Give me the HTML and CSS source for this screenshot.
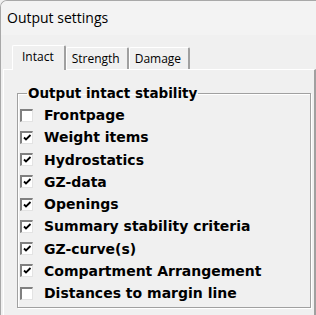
FILE: index.html
```html
<!DOCTYPE html>
<html lang="en">
<head>
    <meta charset="UTF-8">
    <title>Output settings</title>
    <link rel="stylesheet" href="styles.css">
</head>
<body>
    <div class="window">
        <div class="titlebar">Output settings</div>
        <div class="content">
            <div class="tabs">
                <div class="tab active">Intact</div>
                <div class="tab">Strength</div>
                <div class="tab">Damage</div>
            </div>
            <div class="panel">
                <fieldset class="group">
                    <legend>Output intact stability</legend>
                    <ul class="options">
                        <li><span class="check"></span>Frontpage</li>
                        <li><span class="check"><svg viewBox="0 0 9 9"><path d="M1 3.5 L3 5.5 L7.5 1"/></svg></span>Weight items</li>
                        <li><span class="check"><svg viewBox="0 0 9 9"><path d="M1 3.5 L3 5.5 L7.5 1"/></svg></span>Hydrostatics</li>
                        <li><span class="check"><svg viewBox="0 0 9 9"><path d="M1 3.5 L3 5.5 L7.5 1"/></svg></span>GZ-data</li>
                        <li><span class="check"><svg viewBox="0 0 9 9"><path d="M1 3.5 L3 5.5 L7.5 1"/></svg></span>Openings</li>
                        <li><span class="check"><svg viewBox="0 0 9 9"><path d="M1 3.5 L3 5.5 L7.5 1"/></svg></span>Summary stability criteria</li>
                        <li><span class="check"><svg viewBox="0 0 9 9"><path d="M1 3.5 L3 5.5 L7.5 1"/></svg></span>GZ-curve(s)</li>
                        <li><span class="check"><svg viewBox="0 0 9 9"><path d="M1 3.5 L3 5.5 L7.5 1"/></svg></span>Compartment Arrangement</li>
                        <li><span class="check"></span>Distances to margin line</li>
                    </ul>
                </fieldset>
            </div>
        </div>
    </div>
</body>
</html>
```

FILE: styles.css
```css
body{
    margin: 0;
    background-color: #f0f0f0;
    font-family: "DejaVu Sans", Verdana, sans-serif;
}
.window{
    width: 316px;
    height: 315px;
    box-sizing: border-box;
    border-left: 1px solid #a8a8a8;
    border-top: 1px solid #a8a8a8;
    border-top-left-radius: 7px;
    overflow: hidden;
    background-color: #f0f0f0;
}
.titlebar{
    height: 34px;
    box-sizing: border-box;
    padding: 7px 0 0 6px;
    background-color: #f3f3f3;
    font-family: "Open Sans", sans-serif;
    font-size: 14px;
    color: #000;
}
.content{
    padding: 9px 0 0 2px;
}
.tabs{
    display: flex;
    padding-left: 9px;
    align-items: flex-end;
    height: 25px;
    position: relative;
    z-index: 1;
}
.tab{
    font-family: "Open Sans", sans-serif;
    font-size: 12px;
    color: #000;
    height: 22px;
    line-height: 21px;
    padding: 0 7px 0 5px;
    border-top: 1px solid #fff;
    border-left: 1px solid #fff;
    border-right: 2px solid #a0a0a0;
    border-top-left-radius: 2px;
    border-top-right-radius: 2px;
    box-sizing: border-box;
}
.tab.active{
    height: 25px;
    padding: 0 10px 0 9px;
    line-height: 22px;
    background-color: #f0f0f0;
    margin-bottom: -1px;
}
.panel{
    height: 246px;
    box-sizing: border-box;
    border-top: 1px solid #fff;
    border-left: 1px solid #fff;
    border-right: 2px solid #a0a0a0;
    padding: 15px 3px 0 13px;
}
.group{
    margin: 0;
    padding: 3px 0 0 2px;
    height: 223px;
    box-sizing: border-box;
    border: 1px solid #a0a0a0;
    box-shadow: inset 1px 1px 0 #fff, 1px 1px 0 #fff;
}
.group legend{
    font-weight: bold;
    font-size: 13.5px;
    padding: 0 1px;
    margin-left: 7px;
    color: #000;
}
.options{
    list-style: none;
    margin: 0;
    padding: 0;
}
.options li{
    display: flex;
    align-items: center;
    height: 22.25px;
    font-weight: bold;
    font-size: 14px;
    color: #000;
}
.check{
    width: 13px;
    height: 13px;
    flex: none;
    box-sizing: border-box;
    border-top: 2px solid #808080;
    border-left: 2px solid #808080;
    border-right: 1px solid #e3e3e3;
    border-bottom: 1px solid #e3e3e3;
    background-color: #fff;
    margin-right: 11px;
    display: flex;
    padding: 1px 0 0 1px;
}
.check svg{
    width: 9px;
    height: 9px;
}
.check path{
    fill: none;
    stroke: #000;
    stroke-width: 1.8;
}
```
